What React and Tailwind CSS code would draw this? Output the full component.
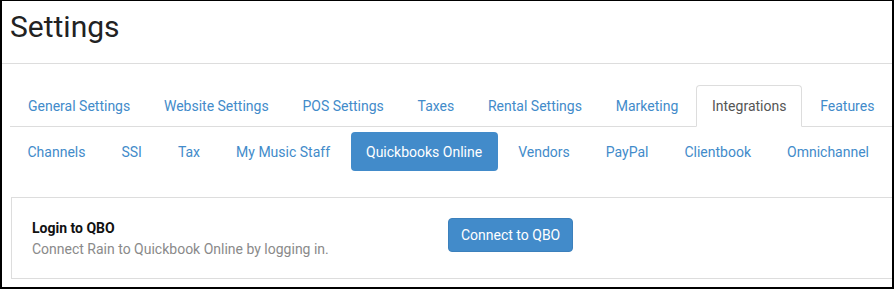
import React from 'react';

const mainTabs = [
  'General Settings',
  'Website Settings',
  'POS Settings',
  'Taxes',
  'Rental Settings',
  'Marketing',
  'Integrations',
  'Features',
];

const subTabs = [
  'Channels',
  'SSI',
  'Tax',
  'My Music Staff',
  'Quickbooks Online',
  'Vendors',
  'PayPal',
  'Clientbook',
  'Omnichannel',
];

export default function App() {
  const activeTab = 'Integrations';
  const activeSub = 'Quickbooks Online';

  return (
    <div
      className="w-[894px] h-[289px] overflow-hidden bg-white border-t border-l-2 border-r-2 border-b-2 border-black text-[14px] text-[#333]"
      style={{ fontFamily: 'Roboto, "Liberation Sans", Arial, sans-serif' }}
    >
      <div className="h-[63px] border-b border-[#dddddd] pl-[8px] pt-[8px]">
        <h1 className="text-[30px] leading-[35px] font-normal text-[#222222]">Settings</h1>
      </div>

      <div className="w-[1000px]">
        <ul className="mt-[21px] ml-[8px] flex border-b border-[#dddddd] whitespace-nowrap">
          {mainTabs.map((tab, idx) => (
            <li key={idx} className={`mr-[1.75px] -mb-px ${idx === 0 ? 'ml-[2px]' : ''}`}>
              <a
                href="#"
                className={`block px-[15px] py-[10px] leading-[20px] rounded-t-[4px] border ${
                  tab === activeTab
                    ? 'border-[#dddddd] border-b-white bg-white text-[#555555]'
                    : 'border-transparent text-[#428bca]'
                }`}
              >
                {tab}
              </a>
            </li>
          ))}
        </ul>

        <ul className="mt-[5px] ml-[8px] flex whitespace-nowrap">
          {subTabs.map((tab, idx) => (
            <li key={idx} className={idx === 0 ? 'ml-[2px]' : 'ml-[5px]'}>
              <a
                href="#"
                className={`block px-[15.5px] py-[9.5px] leading-[20px] rounded-[4px] ${
                  tab === activeSub ? 'bg-[#428bca] text-white' : 'text-[#428bca]'
                }`}
              >
                {tab}
              </a>
            </li>
          ))}
        </ul>

        <div className="mt-[26px] ml-[9px] w-[960px] border border-[#dddddd] px-[20px] pt-[20px] pb-[19px] flex items-start">
          <div className="w-[416px]">
            <p className="font-bold text-[#111111] leading-[20px]">Login to QBO</p>
            <p className="text-[#8a8a8a] leading-[20px] mt-[1px]">Connect Rain to Quickbook Online by logging in.</p>
          </div>
          <button className="bg-[#428bca] text-white border border-[#3c80bc] rounded-[4px] px-[12px] py-[6px] leading-[20px]">
            Connect to QBO
          </button>
        </div>
      </div>
    </div>
  );
}
